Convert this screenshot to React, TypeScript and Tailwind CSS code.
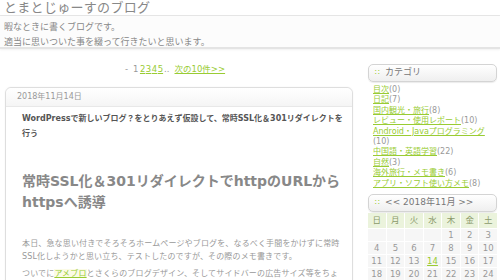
import React from 'react';

const font = { fontFamily: '"DejaVu Sans", "Noto Sans CJK JP", sans-serif' };

const categories: [string, string][] = [
  ['目次', '(0)'],
  ['日記', '(7)'],
  ['国内観光・旅行', '(8)'],
  ['レビュー・使用レポート', '(10)'],
  ['Android・Javaプログラミング', '(10)'],
  ['中国語・英語学習', '(22)'],
  ['自然', '(3)'],
  ['海外旅行・メモ書き', '(6)'],
  ['アプリ・ソフト使い方メモ', '(8)'],
];

const days = [
  '', '', '', '', '1', '2', '3',
  '4', '5', '6', '7', '8', '9', '10',
  '11', '12', '13', '14', '15', '16', '17',
  '18', '19', '20', '21', '22', '23', '24',
];

const SideHead = ({ children }: { children: React.ReactNode }) => (
  <div className="flex items-center h-[18px] rounded-[5px] border border-[#d4d4d4] bg-gradient-to-b from-white to-[#efefef] px-[6px] text-[9px] text-[#777] shadow-[0_1px_1px_rgba(0,0,0,0.08)]">
    <span className="text-[#9c3] mr-[5px] text-[8px] leading-none">∷</span>
    {children}
  </div>
);

export default function App() {
  return (
    <div className="w-[500px] h-[280px] overflow-hidden bg-white" style={font}>
      {/* header */}
      <div className="h-[16px] border-b border-[#e6e6e6] overflow-hidden">
        <h1 className="text-[13px] leading-none text-[#888] pl-[4px] mt-[1px] tracking-[0.3px]">とまとじゅーすのブログ</h1>
      </div>
      <div className="h-[33px] bg-[#fcfcfc] border-b-[2px] border-[#e4e4e4] pl-[4px] pt-[4px] text-[9px] leading-[15px] text-[#888] shadow-[0_1px_2px_rgba(0,0,0,0.06)]">
        <p>暇なときに書くブログです。</p>
        <p>適当に思いついた事を綴って行きたいと思います。</p>
      </div>

      <div className="flex">
        {/* main */}
        <div className="w-[353px] pl-[5px]">
          <div className="h-[38px] pt-[2px] flex items-center justify-center pr-[8px] text-[8.5px] text-[#999]">
            <span>-</span>
            <span className="ml-[5px] mr-[1px]">1</span>
            {['2', '3', '4', '5'].map(n => (
              <span key={n} className="text-[#9c3] underline ml-[0.5px]">{n}</span>
            ))}
            <span className="ml-[1px]">..</span>
            <span className="ml-[5px] text-[#9c3] underline">次の10件&gt;&gt;</span>
          </div>
          <div className="rounded-t-[6px] border border-[#dedede] h-[200px] shadow-[0_0_2px_rgba(0,0,0,0.05)]">
            <div className="h-[19px] flex items-center pl-[11px] text-[8px] text-[#999] bg-gradient-to-b from-white to-[#f5f5f5] border-b border-[#e8e8e8] rounded-t-[6px]">
              2018年11月14日
            </div>
            <div className="pl-[16px] pr-[8px]">
              <p className="mt-[4px] text-[8px] leading-[15px] font-bold text-[#555]">
                WordPressで新しいブログ？をとりあえず仮設して、常時SSL化＆301リダイレクトを行う
              </p>
              <h2 className="mt-[30px] text-[14px] leading-[21px] font-bold text-[#888] whitespace-nowrap">
                常時SSL化＆301リダイレクトでhttpのURLから<br />httpsへ誘導
              </h2>
              <p className="mt-[24px] text-[8px] leading-[13px] text-[#999] tracking-[0.15px] whitespace-nowrap">
                本日、急な思い付きでそろそろホームページやブログを、なるべく手間をかけずに常時<br />
                SSL化しようかと思い立ち、テストしたのですが、その際のメモ書きです。
              </p>
              <p className="mt-[4px] text-[8px] leading-[13px] text-[#999] tracking-[0.15px] whitespace-nowrap">
                ついでに<span className="text-[#9c3] underline bg-[#fbfbe6]">アメブロ</span>とさくらのブログデザイン、そしてサイドバーの広告サイズ等をちょ
              </p>
            </div>
          </div>
        </div>

        {/* sidebar */}
        <div className="w-[129px] ml-[15px] pt-[15px]">
          <SideHead>カテゴリ</SideHead>
          <ul className="mt-[3px] pl-[5px] text-[8px] leading-[10.4px] text-[#999]">
            {categories.map(([name, count]) => (
              <li key={name}>
                <span className="text-[#9c3] underline">{name}</span>
                {count}
              </li>
            ))}
          </ul>
          <div className="mt-[5px]">
            <SideHead>&lt;&lt; 2018年11月 &gt;&gt;</SideHead>
          </div>
          {/* calendar */}
          <div className="mt-[1px] grid grid-cols-7 gap-[1px] text-[8.5px] text-[#999]">
            {['日', '月', '火', '水', '木', '金', '土'].map(d => (
              <div key={d} className="h-[15px] flex items-center justify-center bg-[#ebf3dc] text-[#8a9a6a]">{d}</div>
            ))}
            {days.map((d, i) => (
              <div key={i} className="h-[12px] leading-[12px] bg-[#f6f6f6] text-center">
                {d === '14' ? <span className="text-[#9c3] underline">{d}</span> : d}
              </div>
            ))}
          </div>
        </div>
      </div>
    </div>
  );
}
